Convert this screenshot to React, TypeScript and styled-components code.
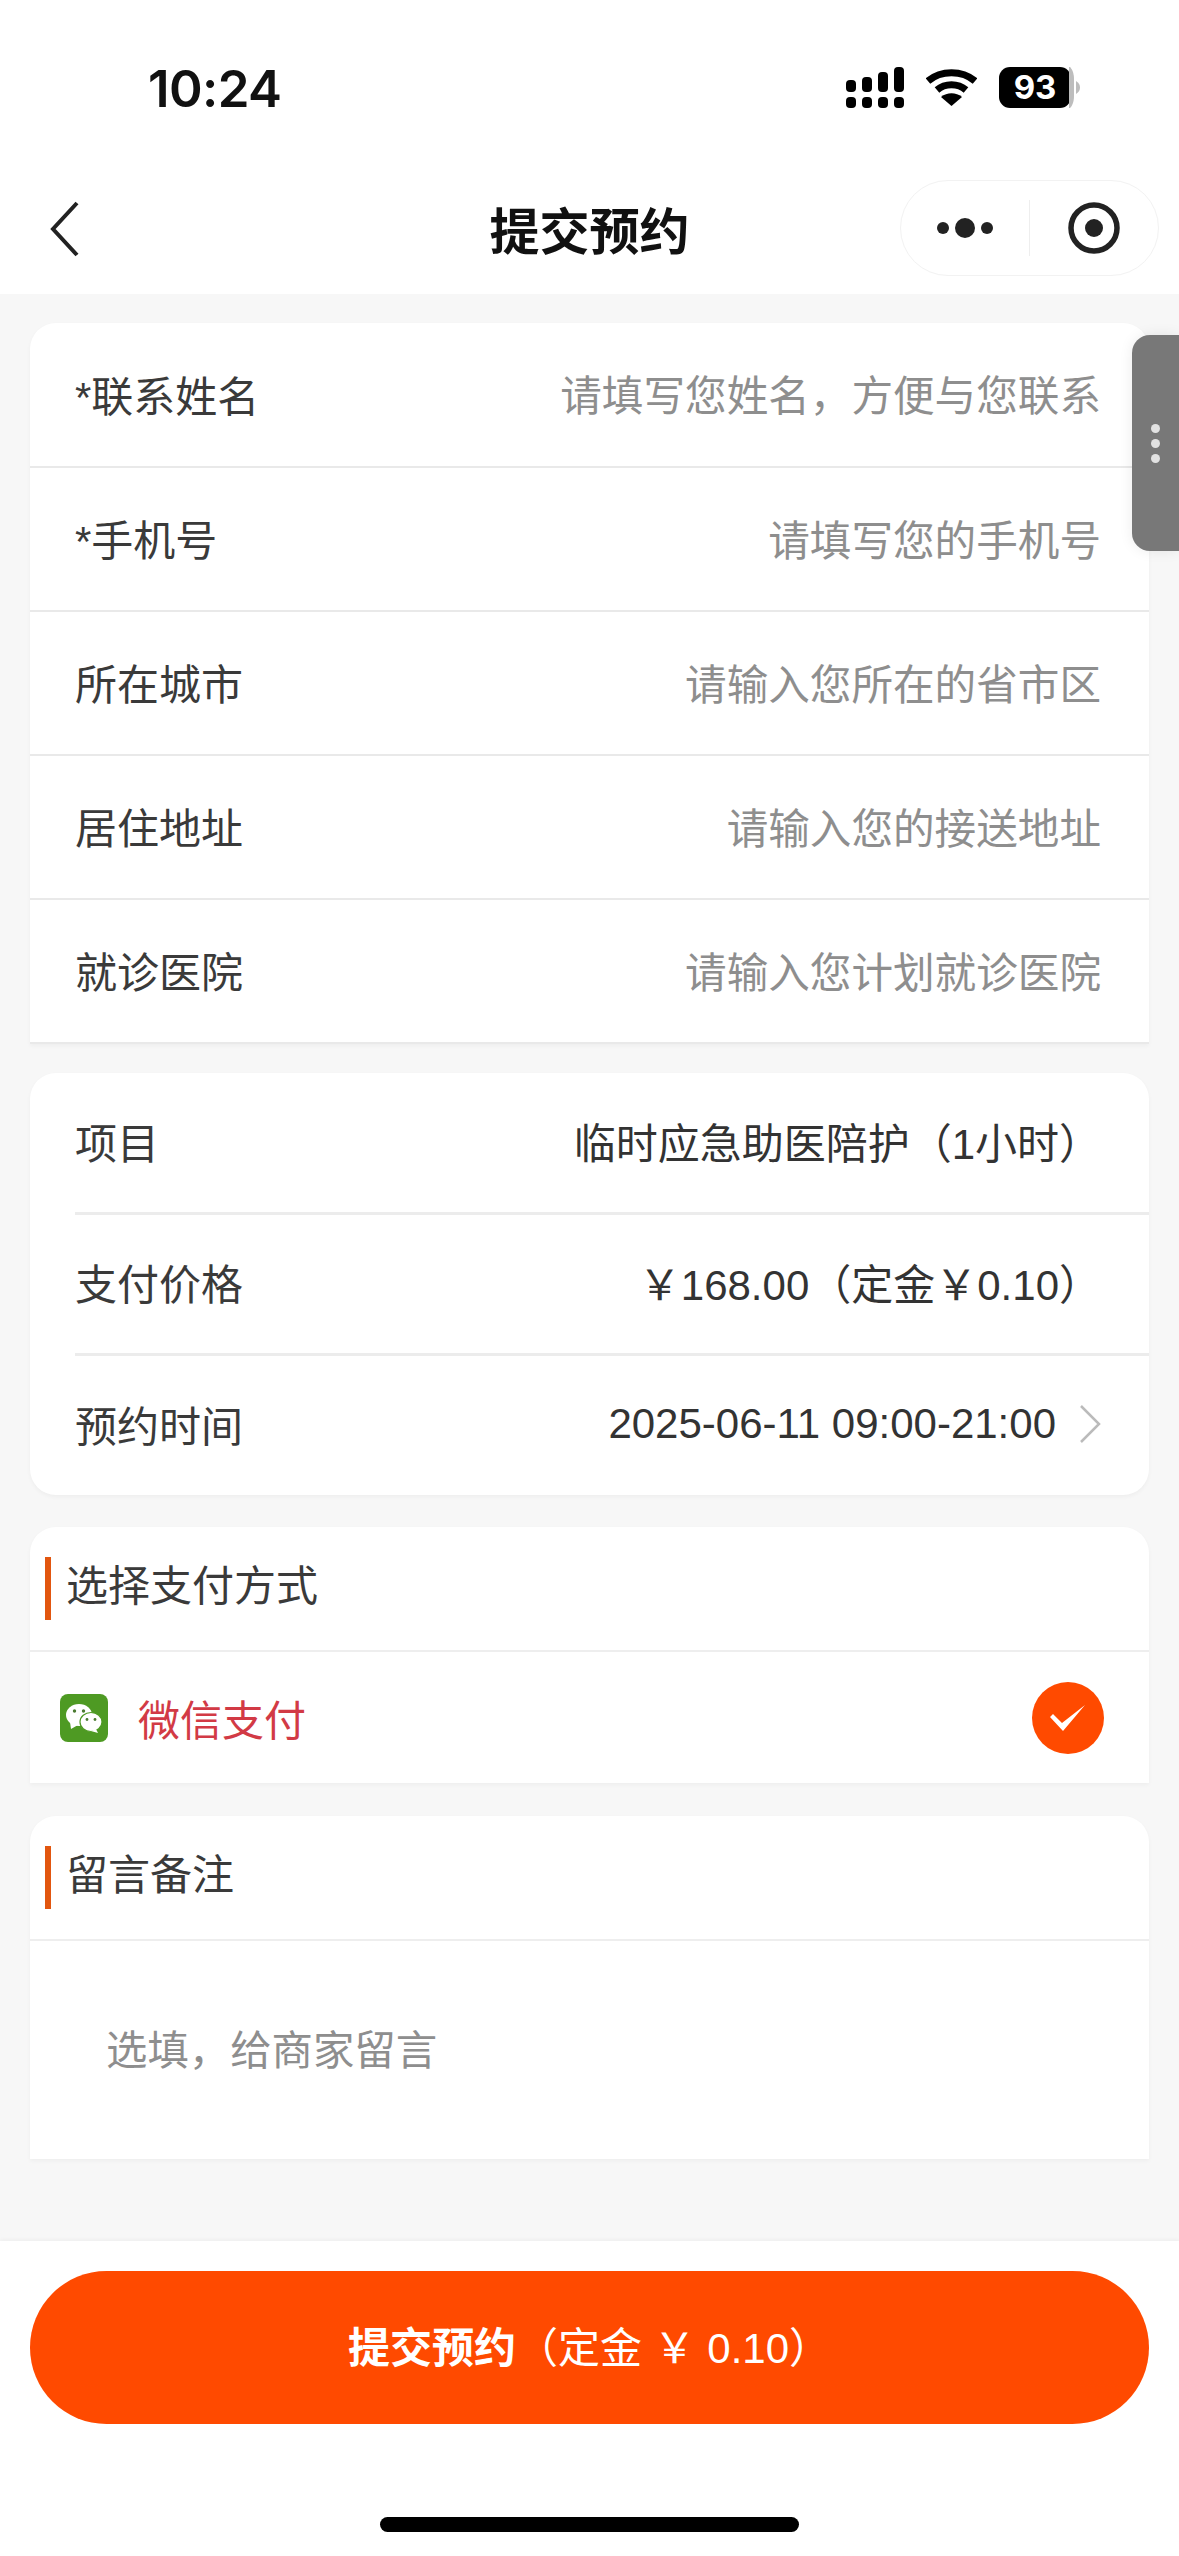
import React from "react";
import styled, { createGlobalStyle } from "styled-components";

const GlobalStyle = createGlobalStyle`
  html, body {
    margin: 0;
    padding: 0;
    background: #f7f7f7;
  }
  * {
    box-sizing: border-box;
  }
`;

const FONT = `"Liberation Sans", "Noto Sans CJK SC", sans-serif`;

const Page = styled.div`
  position: relative;
  width: 1179px;
  height: 2556px;
  display: flex;
  flex-direction: column;
  background: #f7f7f7;
  font-family: ${FONT};
  overflow: hidden;
`;

const Header = styled.header`
  height: 294px;
  background: #fff;
  display: flex;
  flex-direction: column;
  flex: none;
`;

const StatusBar = styled.div`
  height: 180px;
  padding: 61px 96px 0 148px;
  display: flex;
  justify-content: space-between;
  align-items: flex-start;
`;

const Time = styled.div`
  font-family: Inter, "Liberation Sans", sans-serif;
  font-size: 51px;
  line-height: 56px;
  font-weight: 600;
  color: #111;
  letter-spacing: -0.6px;
`;

const StatusIcons = styled.div`
  display: flex;
  align-items: center;
  gap: 22px;
  padding-top: 6px;
`;

const Battery = styled.div`
  position: relative;
  width: 72px;
  height: 41px;
  background: #000;
  border-radius: 11px;
  color: #fff;
  font-family: Inter, "Liberation Sans", sans-serif;
  font-size: 33px;
  font-weight: 700;
  line-height: 41px;
  text-align: center;
  margin-right: 12px;
`;

const BatteryEdge = styled.svg`
  position: absolute;
  left: 70px;
  top: 0;
`;

const NavBar = styled.div`
  position: relative;
  height: 114px;
  display: flex;
  align-items: center;
  justify-content: center;
`;

const BackIcon = styled.svg`
  position: absolute;
  left: 47px;
  top: 20px;
`;

const NavTitle = styled.h1`
  margin: 0 0 8px;
  font-size: 50px;
  line-height: 60px;
  font-weight: 700;
  color: #111;
`;

const Capsule = styled.div`
  position: absolute;
  left: 900px;
  top: 0;
  width: 259px;
  height: 96px;
  border: 1px solid #f2f2f2;
  border-radius: 48px;
  background: #fff;
  display: flex;
  align-items: center;
`;

const CapsulePart = styled.div`
  flex: 1;
  height: 100%;
  display: flex;
  align-items: center;
  justify-content: center;
`;

const CapsuleLine = styled.div`
  width: 1px;
  height: 56px;
  background: #eee;
`;

const Content = styled.main`
  flex: 1;
  padding: 0 30px;
  display: flex;
  flex-direction: column;
`;

const Card = styled.section<{ $top: number; $square?: boolean }>`
  margin-top: ${(p) => p.$top}px;
  background: #fff;
  border-radius: ${(p) => (p.$square ? "26px 26px 0 0" : "26px")};
  overflow: hidden;
  box-shadow: 0 2px 4px rgba(0, 0, 0, 0.04);
`;

const FormRow = styled.div`
  height: 144px;
  padding: 0 48px 3px 45px;
  display: flex;
  justify-content: space-between;
  align-items: center;
  border-bottom: 2px solid #e9e9e9;

  &:first-child {
    height: 145px;
  }
`;

const Label = styled.span`
  font-size: 42px;
  color: #3a3a3a;
`;

const Placeholder = styled.span`
  font-size: 41.6px;
  color: #8e8e8e;
`;

const InfoRow = styled.div<{ $last?: boolean }>`
  height: ${(p) => (p.$last ? "139px" : "141.5px")};
  margin-left: 45px;
  padding: 0 48px 4px 0;
  display: flex;
  justify-content: space-between;
  align-items: center;
  border-bottom: ${(p) => (p.$last ? "none" : "3px solid #ececec")};
`;

const Value = styled.span`
  font-size: 42px;
  color: #333;
  display: flex;
  align-items: center;
`;

const ChevronIcon = styled.svg`
  margin-left: 23px;
`;

const SectionHead = styled.div`
  height: 125px;
  padding-left: 15px;
  display: flex;
  align-items: center;
  border-bottom: 2px solid #eee;
`;

const SectionTitle = styled.h2`
  margin: 0;
  padding-left: 15px;
  height: 63px;
  line-height: 60px;
  font-size: 42px;
  font-weight: 400;
  color: #3a3a3a;
  border-left: 6px solid #e2560f;
`;

const PayRow = styled.div`
  height: 131px;
  padding: 0 45px 0 30px;
  display: flex;
  align-items: center;
`;

const WechatBox = styled.svg`
  flex: none;
  margin-right: 30px;
`;

const PayName = styled.span`
  flex: 1;
  font-size: 42px;
  color: #d23a45;
`;

const CheckCircle = styled.div`
  width: 72px;
  height: 72px;
  border-radius: 50%;
  background: #ff4a00;
  display: flex;
  align-items: center;
  justify-content: center;
`;

const NoteArea = styled.div`
  height: 218px;
  padding: 85px 0 0 76px;
  font-size: 41.4px;
  line-height: 50px;
  color: #8e8e8e;
`;

const SideHandle = styled.div`
  position: absolute;
  left: 1132px;
  top: 335px;
  width: 47px;
  height: 216px;
  background: #787878;
  border-radius: 18px 0 0 18px;
  box-shadow: 0 0 14px rgba(0, 0, 0, 0.08);
  display: flex;
  flex-direction: column;
  align-items: center;
  justify-content: center;
  gap: 6px;
`;

const HandleDot = styled.span`
  width: 9px;
  height: 9px;
  border-radius: 50%;
  background: #e2e2e2;
`;

const Footer = styled.footer`
  height: 315px;
  flex: none;
  background: #fff;
  padding: 30px 30px 0;
  display: flex;
  flex-direction: column;
  align-items: center;
  box-shadow: 0 -2px 3px rgba(0, 0, 0, 0.03);
`;

const SubmitButton = styled.button`
  width: 1119px;
  height: 153px;
  flex: none;
  border: none;
  border-radius: 77px;
  background: #ff4a00;
  color: #fff;
  font-family: ${FONT};
  font-size: 42px;
  padding: 0 0 6px;
`;

const SubmitStrong = styled.span`
  font-weight: 700;
`;

const HomeBar = styled.div`
  width: 419px;
  height: 15px;
  margin-top: 93px;
  border-radius: 8px;
  background: #000;
`;

const formRows = [
  { label: "*联系姓名", hint: "请填写您姓名，方便与您联系" },
  { label: "*手机号", hint: "请填写您的手机号" },
  { label: "所在城市", hint: "请输入您所在的省市区" },
  { label: "居住地址", hint: "请输入您的接送地址" },
  { label: "就诊医院", hint: "请输入您计划就诊医院" },
];

const SignalIcon = () => (
  <svg width="58" height="41" viewBox="0 0 58 41" fill="#000">
    <rect x="0" y="13" width="10" height="12" rx="4" />
    <rect x="16" y="10" width="10" height="15" rx="4" />
    <rect x="32" y="5" width="10" height="20" rx="4" />
    <rect x="48" y="0" width="10" height="25" rx="4" />
    <rect x="0" y="30" width="10" height="11" rx="4" />
    <rect x="16" y="30" width="10" height="11" rx="4" />
    <rect x="32" y="30" width="10" height="11" rx="4" />
    <rect x="48" y="30" width="10" height="11" rx="4" />
  </svg>
);

const WifiIcon = () => (
  <svg width="51" height="37" viewBox="0 0 51 37" fill="none" stroke="#000" strokeWidth="7">
    <path d="M2 12 C15 1 36 1 49 12" />
    <path d="M11 21 C19 14 32 14 40 21" />
    <path d="M25.5 37 L15 28 C21 23 30 23 36 28 Z" fill="#000" stroke="none" />
  </svg>
);

const App = () => {
  return (
    <Page>
      <GlobalStyle />
      <Header>
        <StatusBar>
          <Time>10:24</Time>
          <StatusIcons>
            <SignalIcon />
            <WifiIcon />
            <Battery>
              93
              <BatteryEdge width="16" height="41" viewBox="0 0 16 41">
                <path d="M0 0 H1 C3 2 5 6 5 12 V29 C5 35 3 39 1 41 H0 Z" fill="#bdbdbd" />
                <path d="M7 14 C10 16 11 18 11 20.5 C11 23 10 25 7 27 Z" fill="#bdbdbd" />
              </BatteryEdge>
            </Battery>
          </StatusIcons>
        </StatusBar>
        <NavBar>
          <BackIcon width="32" height="58" viewBox="0 0 32 58" fill="none">
            <path d="M30 3 L6 29 L30 55" stroke="#222" strokeWidth="4" />
          </BackIcon>
          <NavTitle>提交预约</NavTitle>
          <Capsule>
            <CapsulePart>
              <svg width="56" height="20" viewBox="0 0 56 20" fill="#222">
                <circle cx="6" cy="10" r="6" />
                <circle cx="28" cy="10" r="10" />
                <circle cx="50" cy="10" r="6" />
              </svg>
            </CapsulePart>
            <CapsuleLine />
            <CapsulePart>
              <svg width="52" height="52" viewBox="0 0 52 52">
                <circle cx="26" cy="26" r="23" fill="none" stroke="#222" strokeWidth="5.5" />
                <circle cx="26" cy="26" r="9" fill="#222" />
              </svg>
            </CapsulePart>
          </Capsule>
        </NavBar>
      </Header>

      <Content>
        <Card $top={29} $square>
          {formRows.map((row) => (
            <FormRow key={row.label}>
              <Label>{row.label}</Label>
              <Placeholder>{row.hint}</Placeholder>
            </FormRow>
          ))}
        </Card>

        <Card $top={29}>
          <InfoRow>
            <Label>项目</Label>
            <Value>临时应急助医陪护（1小时）</Value>
          </InfoRow>
          <InfoRow>
            <Label>支付价格</Label>
            <Value>￥168.00（定金￥0.10）</Value>
          </InfoRow>
          <InfoRow $last>
            <Label>预约时间</Label>
            <Value>
              2025-06-11 09:00-21:00
              <ChevronIcon width="22" height="38" viewBox="0 0 22 38" fill="none">
                <path d="M2 1 L20 19 L2 37" stroke="#bbb" strokeWidth="2.5" />
              </ChevronIcon>
            </Value>
          </InfoRow>
        </Card>

        <Card $top={32} $square>
          <SectionHead>
            <SectionTitle>选择支付方式</SectionTitle>
          </SectionHead>
          <PayRow>
            <WechatBox width="48" height="48" viewBox="0 0 48 48">
              <rect width="48" height="48" rx="8" fill="#4e9a23" />
              <ellipse cx="19" cy="21" rx="13" ry="11" fill="#fff" />
              <path d="M10 28 L11 35 L18 31 Z" fill="#fff" />
              <ellipse cx="31" cy="28" rx="11" ry="9.5" fill="#fff" stroke="#4e9a23" strokeWidth="1.2" />
              <path d="M36 35 L38 39 L31 37 Z" fill="#fff" />
              <circle cx="14.5" cy="17" r="1.7" fill="#4a7a30" />
              <circle cx="23.5" cy="17" r="1.7" fill="#4a7a30" />
              <circle cx="27" cy="25.5" r="1.4" fill="#4a7a30" />
              <circle cx="35" cy="25.5" r="1.4" fill="#4a7a30" />
            </WechatBox>
            <PayName>微信支付</PayName>
            <CheckCircle>
              <svg width="38" height="28" viewBox="0 0 38 28">
                <path d="M1 13 L4 10 L13 19 L36 1 L14 27 Z" fill="#fff" />
              </svg>
            </CheckCircle>
          </PayRow>
        </Card>

        <Card $top={33} $square>
          <SectionHead>
            <SectionTitle>留言备注</SectionTitle>
          </SectionHead>
          <NoteArea>选填，给商家留言</NoteArea>
        </Card>
      </Content>

      <SideHandle>
        <HandleDot />
        <HandleDot />
        <HandleDot />
      </SideHandle>

      <Footer>
        <SubmitButton>
          <SubmitStrong>提交预约</SubmitStrong>（定金 ￥ 0.10）
        </SubmitButton>
        <HomeBar />
      </Footer>
    </Page>
  );
};

export default App;
